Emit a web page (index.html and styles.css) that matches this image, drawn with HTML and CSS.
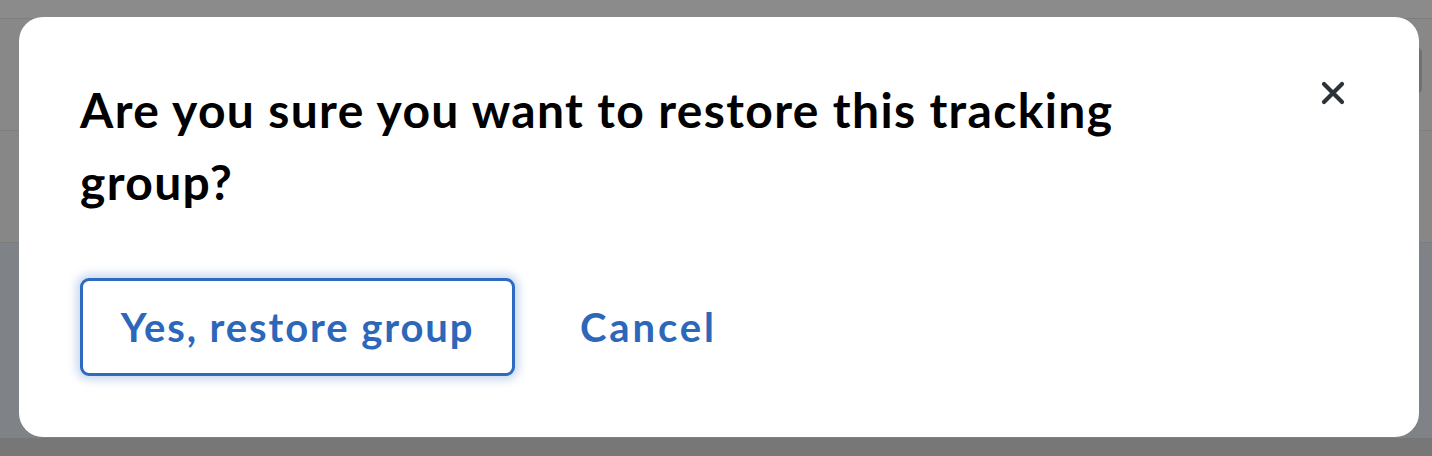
FILE: index.html
```html
<!DOCTYPE html>
<html lang="en">
<head>
<meta charset="utf-8">
<title>Restore tracking group</title>
<link rel="stylesheet" href="styles.css">
</head>
<body>
<div class="page">
  <div class="row row-top"></div>
  <div class="row row-a"><span class="peek"></span></div>
  <div class="row row-b"></div>
  <div class="row row-c"></div>
  <div class="row row-d"></div>
</div>
<div class="modal" role="dialog" aria-labelledby="dlg-title">
  <button class="close" aria-label="Close">
    <svg width="24" height="24" viewBox="0 0 24 24" fill="none" stroke="#2b3338" stroke-width="4.2" stroke-linecap="round">
      <path d="M3 3 L21 21 M21 3 L3 21"/>
    </svg>
  </button>
  <h2 id="dlg-title" class="title">Are you sure you want to restore this tracking group?</h2>
  <div class="actions">
    <button class="btn btn-outline">Yes, restore group</button>
    <button class="btn btn-link">Cancel</button>
  </div>
</div>
</body>
</html>
```

FILE: styles.css
```css
html, body {
  margin: 0;
  padding: 0;
}
body {
  width: 1432px;
  height: 456px;
  overflow: hidden;
  position: relative;
  background: #878887;
  font-family: Lato, "Liberation Sans", sans-serif;
}
.page {
  display: flex;
  flex-direction: column;
  height: 456px;
}
.row {
  box-sizing: border-box;
}
.row-top {
  height: 19px;
  background: #8a8b8a;
  border-bottom: 1px solid #7d7e7d;
}
.row-a {
  height: 112px;
  background: #878887;
  border-bottom: 1px solid #7d7e7d;
  display: flex;
  justify-content: flex-end;
  align-items: flex-start;
}
.peek {
  width: 40px;
  height: 47px;
  margin-top: 28px;
  margin-right: 10px;
  border-radius: 6px;
  background: #6e7072;
}
.row-b {
  height: 112px;
  background: #868786;
  border-bottom: 1px solid #7b7c7c;
}
.row-c {
  height: 195px;
  background: #7f8387;
}
.row-d {
  flex: 1;
  background: #777777;
}
.modal {
  position: absolute;
  left: 19px;
  top: 17px;
  width: 1400px;
  height: 420px;
  box-sizing: border-box;
  background: #ffffff;
  border-radius: 24px;
  padding: 57px 61px 0 61px;
}
.close {
  position: absolute;
  top: 60px;
  right: 70px;
  width: 32px;
  height: 32px;
  padding: 0;
  border: none;
  background: transparent;
  display: flex;
  align-items: center;
  justify-content: center;
  cursor: pointer;
}
.title {
  margin: 0;
  width: 1110px;
  font-size: 48px;
  line-height: 72px;
  font-weight: 700;
  letter-spacing: 1.35px;
  color: #000000;
}
.actions {
  display: flex;
  align-items: center;
  gap: 65px;
  margin-top: 60px;
}
.btn {
  font-family: Lato, "Liberation Sans", sans-serif;
  font-size: 40px;
  font-weight: 700;
  letter-spacing: 1.9px;
  color: #2c67ba;
  background: transparent;
  cursor: pointer;
}
.btn-outline {
  box-sizing: border-box;
  height: 98px;
  width: 435px;
  padding: 0;
  border: 3px solid #2d6bc0;
  border-radius: 9px;
  background: #ffffff;
  box-shadow: 0 0 9px 4px rgba(45, 107, 192, 0.25);
}
.btn-link {
  border: none;
  padding: 0;
  letter-spacing: 2.9px;
}
```
